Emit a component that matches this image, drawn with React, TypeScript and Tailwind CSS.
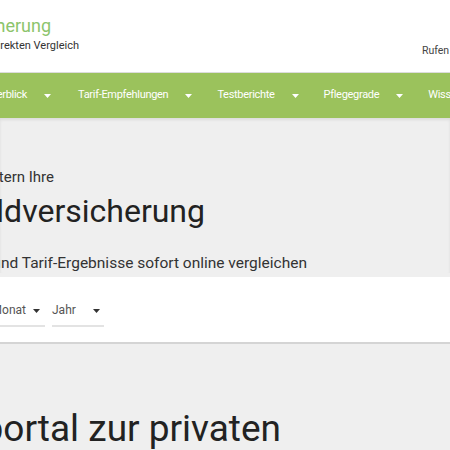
import React from "react";

const Caret = ({ color = "white" }: { color?: string }) => (
  <svg width="7" height="4" viewBox="0 0 7 4" className="shrink-0">
    <path d="M0 0 L7 0 L3.5 4 Z" fill={color} />
  </svg>
);

const NavItem = ({ label }: { label: string }) => (
  <div className="flex items-center shrink-0">
    <span>{label}</span>
    <span className="ml-[17px]"><Caret /></span>
  </div>
);

export default function App() {
  return (
    <div className="w-[450px] h-[450px] overflow-hidden bg-[#efefef] font-['Roboto',sans-serif] text-[#333]">
      {/* header */}
      <div className="h-[73px] bg-white border-b border-[#dcdcdc] flex relative">
        <div className="w-[200px] flex flex-col pt-[14px]">
          <div className="flex justify-end w-[51px] whitespace-nowrap">
            <span className="text-[18px] leading-[24px] text-[#8cc46c]">Pflegeversicherung</span>
          </div>
          <div className="flex justify-end w-[79px] whitespace-nowrap">
            <span className="text-[11px] leading-[16px] text-[#333]">im direkten Vergleich</span>
          </div>
        </div>
        <div className="ml-auto pt-[43px] w-[28px] whitespace-nowrap text-[10.5px] leading-[16px] text-[#444]">
          Rufen Sie uns an
        </div>
      </div>
      {/* nav */}
      <div className="h-[45px] bg-[#9bc25c] flex items-center text-white text-[11px] font-normal tracking-[-0.3px] whitespace-nowrap overflow-hidden">
        <div className="flex items-center gap-[25px]">
          <div className="w-[51px] flex justify-end shrink-0 mr-[2px]">
            <NavItem label="Marktüberblick" />
          </div>
          <NavItem label="Tarif-Empfehlungen" />
          <NavItem label="Testberichte" />
          <NavItem label="Pflegegrade" />
          <NavItem label="Wissenswertes" />
        </div>
      </div>
      {/* hero */}
      <div className="shadow-[inset_0_2px_3px_rgba(0,0,0,0.08)] pt-[49px]">
        <div className="flex justify-end w-[54px] whitespace-nowrap">
          <span className="text-[15px] leading-[20px]">Wir erleichtern Ihre</span>
        </div>
        <div className="flex justify-end w-[205px] whitespace-nowrap mt-[4px]">
          <span className="text-[32px] leading-[40px] text-[#222]">Pflegetagegeldversicherung</span>
        </div>
        <div className="flex justify-end w-[307px] whitespace-nowrap mt-[22px]">
          <span className="text-[15.5px] leading-[20px]">Beiträge und Tarif-Ergebnisse sofort online vergleichen</span>
        </div>
      </div>
      <div className="mt-[4px] h-[67px] bg-white border-b-2 border-[#d4d4d4] flex items-start pt-[24px] gap-[7px] text-[12px] text-[#555]">
        <div className="w-[45px] flex justify-end whitespace-nowrap">
          <div className="flex items-center border-b-2 border-[#e3e3e3] pb-[6px] pr-[5px]">
            <span>Monat</span>
            <span className="ml-[7px] mt-[2px]"><Caret color="#333" /></span>
          </div>
        </div>
        <div className="w-[52px] flex items-center border-b-2 border-[#e3e3e3] pb-[6px] whitespace-nowrap">
          <span>Jahr</span>
          <span className="ml-auto mr-[4px] mt-[2px]"><Caret color="#333" /></span>
        </div>
      </div>
      <div className="pt-[61px]">
        <div className="flex justify-end w-[281px] whitespace-nowrap">
          <span className="text-[37px] leading-[48px] text-[#222]">Ihr Vergleichsportal zur privaten</span>
        </div>
      </div>
    </div>
  );
}
